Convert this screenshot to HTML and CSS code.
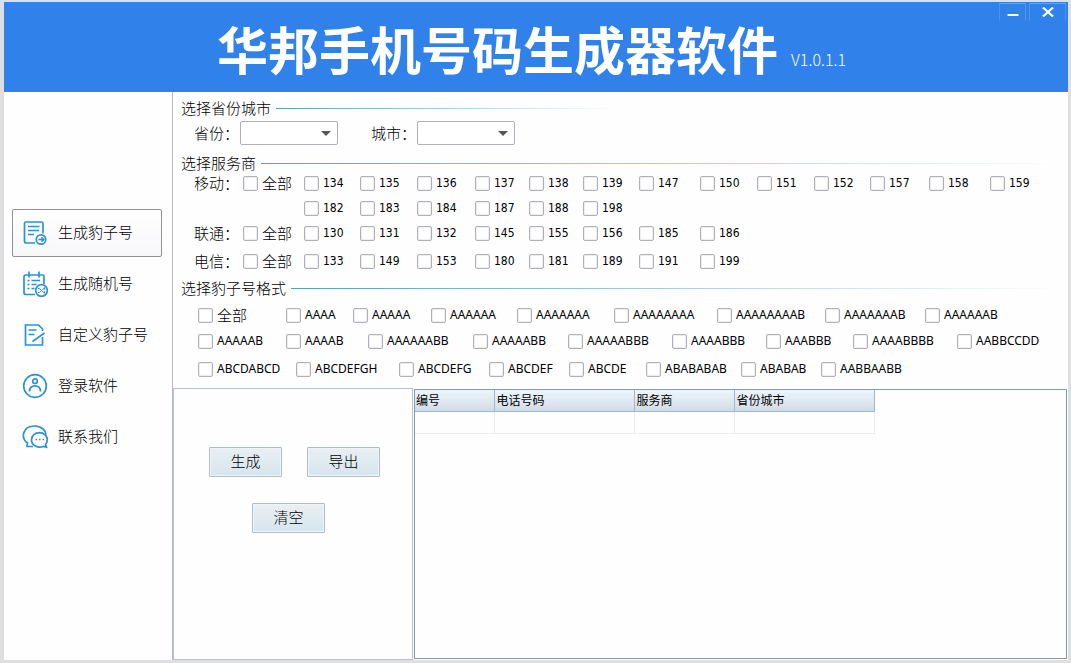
FILE: index.html
```html
<!DOCTYPE html>
<html lang="zh-CN">
<head>
<meta charset="utf-8">
<title>华邦手机号码生成器软件</title>
<link rel="stylesheet" href="styles.css">
</head>
<body>
<div class="window">
  <header class="titlebar">
    <h1 class="title">华邦手机号码生成器软件</h1>
    <span class="version">V1.0.1.1</span>
    <div class="controls">
      <button class="control control-min" type="button" aria-label="最小化"><svg width="12" height="12" viewBox="0 0 12 12"><path d="M0.5 9h11" stroke="#fff" stroke-width="2"/></svg></button>
      <button class="control control-close" type="button" aria-label="关闭"><svg width="12" height="12" viewBox="0 0 12 12"><path d="M1 1.5l10 9M11 1.5l-10 9" stroke="#fff" stroke-width="2.3"/></svg></button>
    </div>
  </header>
  <div class="body">
    <nav class="sidebar">
      <button class="nav-item active" type="button">
        <svg class="icon" viewBox="0 0 26 26"><path d="M13 23H4.500Q2.500 23 2.500 21V3.500Q2.500 2 4 2H19.500Q21 2 21 3.500V13.500"/><path d="M6 6.500h11.500M6 10.500h11M6 14.500h6"/><circle cx="19" cy="19.500" r="4.700"/><path d="M16.500 19.500h5M19.500 17.300l2.200 2.200-2.200 2.200"/></svg>
        <span>生成豹子号</span></button>
      <button class="nav-item" type="button">
        <svg class="icon" viewBox="0 0 26 26"><path d="M13 23.500H4Q2 23.500 2 21.500V6Q2 4 3.500 4H21Q22 4 22 5.500V13M7 0.500v6M17 0.500v6"/><path d="M5.500 9.500h2M9.500 9.500h8.500M5.500 13.500h2M9.500 13.500h5M5.500 17.500h2M9.500 17.500h3"/><circle cx="19.500" cy="19.500" r="5.800"/><path class="thin" d="M16 17.500h1.500l4 4h1.500M16 21.500h1.500l4-4h1.500M21.700 16.200l1.500 1.300-1.500 1.300M21.700 20.200l1.500 1.300-1.500 1.300"/></svg>
        <span>生成随机号</span></button>
      <button class="nav-item" type="button">
        <svg class="icon" viewBox="0 0 26 26"><path d="M20.500 9V7L16.500 3H3.500V23H20.500V15"/><path d="M6.500 8h8M6.500 12.500h6M10.500 19.500L22.500 11"/></svg>
        <span>自定义豹子号</span></button>
      <button class="nav-item" type="button">
        <svg class="icon" viewBox="0 0 26 26"><circle cx="13" cy="13" r="11.300"/><circle cx="13" cy="8.200" r="2.300"/><path d="M7.500 18.500Q7.500 12.800 13 12.800T18.500 18.500"/></svg>
        <span>登录软件</span></button>
      <button class="nav-item" type="button">
        <svg class="icon" viewBox="0 0 26 26"><path d="M11 22.500H5L5.500 19C-1.500 14 .5 2 12.500 2C20 2 23.500 6.500 24 10.500"/><path d="M23.500 20.500l1 2.700-3.500-.7C16 24.500 9.500 21.500 9.500 16C9.500 11.500 13 8.700 17.500 8.700C22 8.700 25.300 12 25.300 15.500C25.300 18 24.300 19.500 23.500 20.500Z"/><path d="M13.500 15.500h1.500M17 15.500h1.500M20.500 15.500h1.500"/></svg>
        <span>联系我们</span></button>
    </nav>
    <main class="main">
      <section>
        <h2 class="section-title short">选择省份城市</h2>
        <div class="region">
          <label for="province">省份：</label>
          <span class="combo"><select id="province"><option></option></select></span>
          <label class="city" for="city">城市：</label>
          <span class="combo"><select id="city"><option></option></select></span>
        </div>
      </section>
      <section>
        <h2 class="section-title">选择服务商</h2>
        <div class="carrier mobile">
          <span>移动：</span><label class="all"><input type="checkbox">全部</label>
          <label><input type="checkbox">134</label><label><input type="checkbox">135</label><label><input type="checkbox">136</label><label><input type="checkbox">137</label><label><input type="checkbox">138</label><label><input type="checkbox">139</label><label><input type="checkbox">147</label><label><input type="checkbox">150</label><label><input type="checkbox">151</label><label><input type="checkbox">152</label><label><input type="checkbox">157</label><label><input type="checkbox">158</label><label><input type="checkbox">159</label>
          <label class="second-line"><input type="checkbox">182</label><label><input type="checkbox">183</label><label><input type="checkbox">184</label><label><input type="checkbox">187</label><label><input type="checkbox">188</label><label><input type="checkbox">198</label>
        </div>
        <div class="carrier unicom">
          <span>联通：</span><label class="all"><input type="checkbox">全部</label>
          <label><input type="checkbox">130</label><label><input type="checkbox">131</label><label><input type="checkbox">132</label><label><input type="checkbox">145</label><label><input type="checkbox">155</label><label><input type="checkbox">156</label><label><input type="checkbox">185</label><label><input type="checkbox">186</label>
        </div>
        <div class="carrier telecom">
          <span>电信：</span><label class="all"><input type="checkbox">全部</label>
          <label><input type="checkbox">133</label><label><input type="checkbox">149</label><label><input type="checkbox">153</label><label><input type="checkbox">180</label><label><input type="checkbox">181</label><label><input type="checkbox">189</label><label><input type="checkbox">191</label><label><input type="checkbox">199</label>
        </div>
      </section>
      <section>
        <h2 class="section-title">选择豹子号格式</h2>
        <div class="formats">
          <div class="format-row repeats">
            <label class="all"><input type="checkbox">全部</label><label><input type="checkbox">AAAA</label><label><input type="checkbox">AAAAA</label><label><input type="checkbox">AAAAAA</label><label><input type="checkbox">AAAAAAA</label><label><input type="checkbox">AAAAAAAA</label><label><input type="checkbox">AAAAAAAAB</label><label><input type="checkbox">AAAAAAAB</label><label><input type="checkbox">AAAAAAB</label>
          </div>
          <div class="format-row pairs">
            <label><input type="checkbox">AAAAAB</label><label><input type="checkbox">AAAAB</label><label><input type="checkbox">AAAAAABB</label><label><input type="checkbox">AAAAABB</label><label><input type="checkbox">AAAAABBB</label><label><input type="checkbox">AAAABBB</label><label><input type="checkbox">AAABBB</label><label><input type="checkbox">AAAABBBB</label><label><input type="checkbox">AABBCCDD</label>
          </div>
          <div class="format-row sequences">
            <label><input type="checkbox">ABCDABCD</label><label><input type="checkbox">ABCDEFGH</label><label><input type="checkbox">ABCDEFG</label><label><input type="checkbox">ABCDEF</label><label><input type="checkbox">ABCDE</label><label><input type="checkbox">ABABABAB</label><label><input type="checkbox">ABABAB</label><label><input type="checkbox">AABBAABB</label>
          </div>
        </div>
      </section>
      <div class="lower">
        <div class="actions">
          <div class="action-row"><button class="action" type="button">生成</button><button class="action" type="button">导出</button></div>
          <div class="action-row clear"><button class="action" type="button">清空</button></div>
        </div>
        <div class="results">
          <table>
            <thead><tr><th class="col-id">编号</th><th class="col-phone">电话号码</th><th class="col-carrier">服务商</th><th class="col-phone">省份城市</th></tr></thead>
            <tbody><tr><td></td><td></td><td></td><td></td></tr></tbody>
          </table>
        </div>
      </div>
    </main>
  </div>
</div>
</body>
</html>
```
FILE: styles.css
```css
* { box-sizing: border-box; }
body {
  margin: 0;
  padding: 2px 3px 3px 4px;
  min-height: 100vh;
  display: flex;
  background: #dfdfe2;
  color: #000;
  font: 300 15px/20px "Noto Sans CJK SC", sans-serif;
}
button, select, input { font: inherit; color: inherit; margin: 0; }
h1, h2 { margin: 0; font-weight: 300; }
.window { flex: 1; display: flex; flex-direction: column; background: #fefefe; }

.titlebar {
  display: flex;
  align-items: center;
  height: 90px;
  padding-left: 213px;
  background: #3082ea;
  color: #fff;
}
.title { padding-top: 2px; font-size: 51px; line-height: 76px; font-weight: 700; white-space: nowrap; }
.version { margin: 24px 0 0 13px; font-size: 16px; line-height: 20px; font-weight: 300; }
.controls { display: flex; gap: 3px; align-self: flex-start; margin: 1px 2px 0 auto; }
.control {
  display: flex;
  justify-content: center;
  align-items: center;
  height: 18px;
  padding: 0;
  border: 1px solid;
  border-color: #6ba7f2 #4b93ee transparent #4b93ee;
  background: none;
}
.control-min { width: 27px; }
.control-close { width: 37px; }

.body { flex: 1; display: flex; }
.sidebar {
  display: flex;
  flex-direction: column;
  gap: 3px;
  width: 169px;
  padding: 117px 10px 0 8px;
  border-right: 1px solid #b8b8bf;
}
.nav-item {
  display: flex;
  align-items: center;
  gap: 10px;
  height: 48px;
  padding: 0 9px;
  border: 1px solid transparent;
  border-radius: 2px;
  background: none;
  text-align: left;
  white-space: nowrap;
}
.nav-item span { padding-bottom: 2px; }
.nav-item.active { border-color: #909096; background: linear-gradient(#fff, #f7f7fa); }
.icon { flex: none; width: 26px; height: 26px; fill: none; stroke: #2d91d3; stroke-width: 1.7; }
.icon .thin { stroke-width: 1; }

.main { flex: 1; display: flex; flex-direction: column; padding-top: 6px; }
.section-title { display: flex; align-items: center; gap: 5px; padding: 0 5px 0 8px; font-size: 15px; }
.section-title::after { content: ""; flex: 1; height: 1px; background: linear-gradient(90deg, #559fc8, #a9cfe3 50%, #fefefe); }
.section-title.short { width: 50%; }
.region { display: flex; align-items: center; height: 30px; margin-bottom: 5px; padding-left: 21px; }
.region label { width: 46px; }
.region .city { margin-left: 33px; }
.combo { position: relative; display: flex; }
.combo select { appearance: none; width: 98px; height: 24px; border: 1px solid #adb0b8; border-radius: 2px; background: #fff; }
.combo::after {
  content: "";
  position: absolute;
  right: 7px;
  top: 10px;
  border: 5px solid transparent;
  border-top-color: #55565a;
  border-bottom: 0;
  pointer-events: none;
}

.carrier {
  display: grid;
  grid-template-columns: 49fr 61fr 56fr 57fr 58fr 54fr 54fr 56fr 61fr 57fr 57fr 56fr 59fr 61fr 78fr;
  row-gap: 5px;
  margin-left: 21px;
}
.carrier > span { white-space: nowrap; }
.second-line { grid-column-start: 3; }
.unicom { margin-top: 5px; }
.telecom { margin-top: 8px; margin-bottom: 7px; }
.carrier label, .format-row label { display: flex; align-items: center; gap: 4px; white-space: nowrap; }
.carrier label { font-family: "DejaVu Sans Condensed", "DejaVu Sans", sans-serif; font-size: 12px; font-weight: 400; }
.format-row label { font-family: "Noto Sans", sans-serif; font-size: 12px; font-weight: 400; }
.carrier .all, .format-row .all { font-family: "Noto Sans CJK SC", sans-serif; font-size: 15px; font-weight: 300; }
input[type="checkbox"] {
  appearance: none;
  flex: none;
  width: 15px;
  height: 15px;
  border: 1px solid #b0b0b6;
  border-radius: 2px;
  background: #fff;
  box-shadow: inset 0 0 1px 1px #eeeef0;
}
input[type="checkbox"]:checked { background: #3082ea; }
.formats { margin: 7px 0 9px 25px; }
.format-row { display: grid; }
.repeats { grid-template-columns: 88fr 67fr 78fr 86fr 97fr 103fr 108fr 100fr 143fr; }
.pairs { grid-template-columns: 88fr 82fr 105fr 95fr 104fr 94fr 87fr 104fr 111fr; margin: 6px 0 8px; }
.sequences { grid-template-columns: 98fr 103fr 90fr 80fr 77fr 95fr 80fr 247fr; }

.lower { flex: 1; display: grid; grid-template-columns: 240px 1fr; column-gap: 1px; }
.actions { display: flex; flex-direction: column; gap: 26px; padding: 58px 0 0 35px; border: 1px solid #bcc2cd; }
.action-row { display: flex; gap: 25px; }
.action-row.clear { padding-left: 43px; }
.action {
  width: 73px;
  height: 30px;
  padding: 0 0 2px;
  border: 1px solid #aebdc6;
  border-radius: 1px;
  background: linear-gradient(#e9eff3, #d5e6ed);
  box-shadow: inset 0 0 0 1px #eef4f7;
}
.results { margin: 1px 1px 1px 0; border: 1px solid #8499ae; }
table { border-collapse: collapse; table-layout: fixed; width: 459px; font-size: 12px; line-height: 18px; }
th {
  height: 21px;
  padding: 0 2px;
  border: solid #a3b8d0;
  border-width: 0 1px 1px 0;
  background: linear-gradient(#eef5fa, #dde7f0 60%, #cfdbe8);
  font-weight: 400;
  text-align: left;
}
td { height: 22px; padding: 0; border: solid #e9ebef; border-width: 0 1px 1px 0; }
.col-id { width: 79px; padding-left: 1px; }
.col-phone { width: 140px; }
.col-carrier { width: 100px; }
```
